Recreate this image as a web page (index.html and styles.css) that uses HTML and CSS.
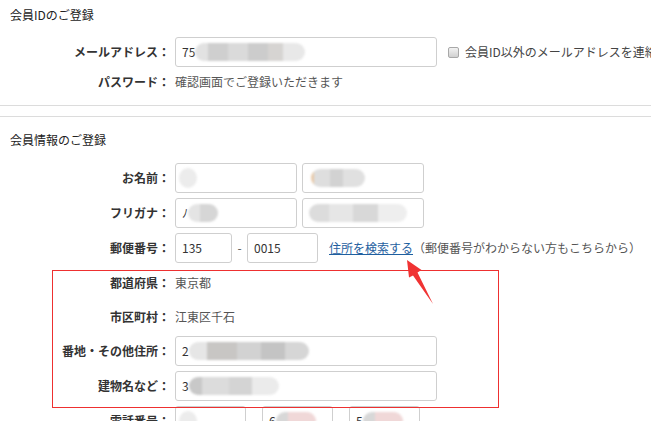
FILE: index.html
```html
<!DOCTYPE html>
<html lang="ja">
<head>
    <meta charset="UTF-8">
    <meta name="viewport" content="width=device-width, initial-scale=1.0">
    <title>会員登録</title>
    <link rel="stylesheet" href="styles.css">
</head>
<body>
    <div class="section first">
        <h2>会員IDのご登録</h2>
        <div class="row">
            <span class="label">メールアドレス：</span>
            <div class="field long">75<span class="mosaic m-mail"></span></div>
            <label class="check"><input type="checkbox">会員ID以外のメールアドレスを連絡先にする</label>
        </div>
        <div class="row note">
            <span class="label">パスワード：</span>
            <span class="value">確認画面でご登録いただきます</span>
        </div>
    </div>

    <div class="section">
        <h2>会員情報のご登録</h2>
        <div class="row">
            <span class="label">お名前：</span>
            <div class="field half"><span class="mosaic m-dot"></span></div>
            <div class="field half"><span class="mosaic m-name"></span></div>
        </div>
        <div class="row">
            <span class="label">フリガナ：</span>
            <div class="field half">ﾉ<span class="mosaic m-kana"></span></div>
            <div class="field half"><span class="mosaic m-kana2"></span></div>
        </div>
        <div class="row">
            <span class="label">郵便番号：</span>
            <div class="field zip1">135</div>
            <span class="dash">-</span>
            <div class="field zip2">0015</div>
            <a class="search" href="#">住所を検索する</a>
            <span class="hint">（郵便番号がわからない方もこちらから）</span>
        </div>

        <div class="addr">
            <div class="row info">
                <span class="label">都道府県：</span>
                <span class="value">東京都</span>
            </div>
            <div class="row info">
                <span class="label">市区町村：</span>
                <span class="value">江東区千石</span>
            </div>
            <div class="row">
                <span class="label">番地・その他住所：</span>
                <div class="field long">2<span class="mosaic m-street"></span></div>
            </div>
            <div class="row">
                <span class="label">建物名など：</span>
                <div class="field long">3<span class="mosaic m-building"></span></div>
            </div>
            <div class="mark"></div>
            <svg class="arrow" width="32" height="48" viewBox="0 0 32 48">
                <polygon points="3,2 17.5,12 13.5,14.5 29,46 9,17.5 5,19.5" fill="#f03333"/>
            </svg>
        </div>

        <div class="row">
            <span class="label">電話番号：</span>
            <div class="field tel"><span class="mosaic m-dot"></span></div>
            <span class="dash tel-dash">-</span>
            <div class="field tel">6<span class="mosaic m-pink"></span></div>
            <span class="dash tel-dash">-</span>
            <div class="field tel">5<span class="mosaic m-pink"></span></div>
        </div>
    </div>
</body>
</html>
```

FILE: styles.css
```css
body {
    margin: 0;
    background: #fff;
    color: #333;
    font-family: "Noto Sans CJK JP", "Noto Sans", sans-serif;
    font-size: 12px;
    line-height: 20px;
    overflow: hidden;
    white-space: nowrap;
}
h2 {
    margin: 0 0 12px;
    padding-left: 10px;
    font-size: 12px;
    font-weight: normal;
    line-height: 20px;
    color: #222;
}
.section {
    border-top: 1px solid #dcdcdc;
    margin-top: 10px;
    padding-top: 13px;
}
.section h2 {
    margin-bottom: 13px;
}
.section.first {
    border-top: none;
    border-bottom: 1px solid #dcdcdc;
    margin-top: 0;
    padding: 5px 0 13px;
}
.section.first h2 {
    margin-bottom: 12px;
}
.row {
    display: flex;
    align-items: center;
    height: 30px;
    margin-bottom: 5px;
}
.row.note {
    height: 20px;
    margin: 3px 0 0;
}
.row.info {
    height: 29px;
}
.label {
    width: 170px;
    flex-shrink: 0;
    margin-right: 5px;
    text-align: right;
    font-weight: bold;
    color: #333;
}
.value {
    color: #555;
}
.field {
    box-sizing: border-box;
    flex-shrink: 0;
    height: 30px;
    border: 1px solid #cfcfcf;
    border-radius: 3px;
    padding: 0 6px;
    display: flex;
    align-items: center;
    color: #333;
    overflow: hidden;
}
.field.long { width: 262px; }
.field.half { width: 122px; margin-right: 5px; }
.field.zip1 { width: 57px; }
.field.zip2 { width: 71px; }
.field.tel { width: 71px; }
.dash {
    width: 15px;
    flex-shrink: 0;
    text-align: center;
    color: #555;
}
.dash.tel-dash { width: 16px; }
.search {
    margin-left: 11px;
    color: #1f5f9f;
}
.hint {
    color: #555;
}
.check {
    display: flex;
    align-items: center;
    margin-left: 11px;
    color: #444;
}
.check input {
    appearance: none;
    flex-shrink: 0;
    width: 11px;
    height: 11px;
    margin: 0 6px 0 0;
    border: 1px solid #a8a8a8;
    border-radius: 2px;
    background: linear-gradient(#f2f2f2, #d0d0d0);
}
.mosaic {
    display: inline-block;
    height: 18px;
    border-radius: 9px;
    filter: blur(1px);
}
.m-mail {
    width: 110px;
    background: linear-gradient(90deg, #e2e2e2 0 12%, #cfcfcf 12% 30%, #dadada 30% 48%, #cccccc 48% 66%, #d6d4d2 66% 80%, #e8e8e8 80%);
}
.m-dot {
    width: 18px;
    height: 20px;
    margin-left: -3px;
    border-radius: 50%;
    background: #ececec;
}
.m-name {
    width: 54px;
    margin-left: 2px;
    background: linear-gradient(90deg, #e8c9a8 0 6%, #dedede 6% 35%, #d2d2d2 35% 60%, #e0e0e0 60%);
}
.m-kana {
    width: 30px;
    background: linear-gradient(90deg, #e4e4e4 0 40%, #d6d6d6 40%);
}
.m-kana2 {
    width: 98px;
    background: linear-gradient(90deg, #dcdcdc 0 20%, #e6e6e6 20% 45%, #d8d8d8 45% 70%, #eeeeee 70%);
}
.m-street {
    width: 120px;
    background: linear-gradient(90deg, #e6e6e6 0 15%, #c8c6c4 15% 40%, #d2d2d2 40% 60%, #c4c4c4 60% 80%, #d6d6d6 80%);
}
.m-building {
    width: 90px;
    background: linear-gradient(90deg, #c8c8c8 0 15%, #dcdcdc 15% 45%, #d4d4d4 45% 70%, #ebebeb 70%);
}
.m-pink {
    width: 40px;
    background: linear-gradient(90deg, #d8d8d8 0 30%, #f0d8d8 30%);
}
.addr {
    position: relative;
}
.mark {
    position: absolute;
    top: 2px;
    left: 52px;
    width: 445px;
    height: 136px;
    border: 1px solid #ee3030;
    pointer-events: none;
}
.arrow {
    position: absolute;
    top: -10px;
    left: 404px;
}
```
